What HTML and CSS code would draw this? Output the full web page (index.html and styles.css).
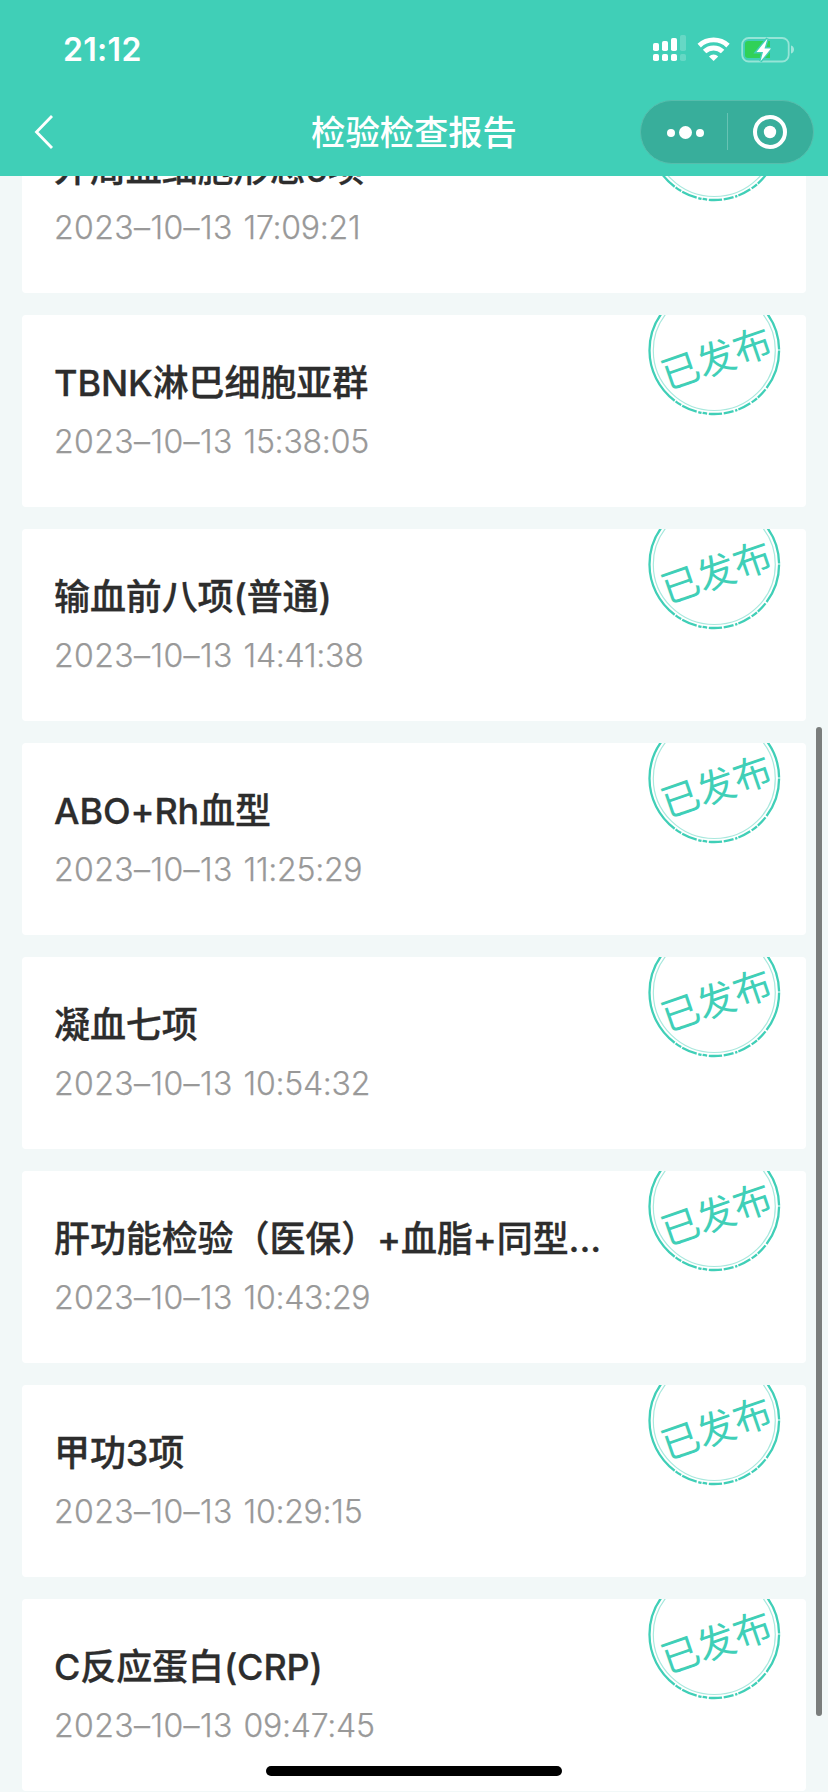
FILE: index.html
```html
<!DOCTYPE html>
<html lang="zh-CN">
<head>
<meta charset="utf-8">
<title>检验检查报告</title>
<link rel="stylesheet" href="styles.css">
</head>
<body>
<svg class="defs" aria-hidden="true">
  <symbol id="stamp" viewBox="0 0 136 136">
    <ellipse cx="68.300" cy="68.500" rx="61" ry="60" class="ring-inner"/>
    <ellipse cx="68.300" cy="68.500" rx="64.800" ry="63.500" class="ring-outer" pathLength="360"/>
    <text x="67.500" y="90.500" transform="rotate(-19 68 68)" text-anchor="middle" class="stamp-text">已发布</text>
  </symbol>
</svg>
<div class="screen">
  <header class="header">
    <div class="status">
      <span class="time">21:12</span>
      <svg class="status-icons" width="150" height="40" viewBox="0 0 150 40">
        <g fill="#fff">
          <rect x="8" y="13" width="6" height="8" rx="1.8"/><rect x="17" y="11" width="6" height="10" rx="1.8"/><rect x="26" y="8" width="6" height="13" rx="1.8"/>
          <rect x="8" y="24" width="6" height="7" rx="1.8"/><rect x="17" y="24" width="6" height="7" rx="1.8"/><rect x="26" y="24" width="6" height="7" rx="1.8"/>
          <g opacity=".2"><rect x="35" y="5" width="6" height="16" rx="1.8"/><rect x="35" y="24" width="6" height="7" rx="1.8"/></g>
        </g>
        <g fill="none" stroke="#fff" stroke-width="4.900">
          <path d="M54.200 15.600a21 21 0 0 1 28.800 0"/>
          <path d="M59.600 21.600a13 13 0 0 1 18 0"/>
        </g>
        <path d="M68.600 31l-4.600-4.600a6.600 6.600 0 0 1 9.200 0z" fill="#fff"/>
        <rect x="97.200" y="8" width="46.500" height="23.500" rx="6.500" fill="none" stroke="#fff" stroke-opacity=".45" stroke-width="1.800"/>
        <path d="M146 15.500c4 1 4 7 0 8z" fill="#fff" fill-opacity=".5"/>
        <path d="M103 11h22v17h-22a3 3 0 0 1-3-3V14a3 3 0 0 1 3-3z" fill="#30d158"/>
        <path d="M122.500 8.500L111.500 22h6.500l-2.500 9.200L126 18.500h-6.500z" fill="#fff" stroke="#40cfb7" stroke-width="3" paint-order="stroke"/>
      </svg>
    </div>
    <div class="nav">
      <svg class="back" width="24" height="40" viewBox="0 0 24 40"><path d="M20 4L4.500 20 20 36" fill="none" stroke="#fff" stroke-width="2.800"/></svg>
      <h1 class="nav-title">检验检查报告</h1>
      <svg class="capsule" width="174" height="64" viewBox="0 0 174 64">
        <rect x=".5" y=".5" width="173" height="63" rx="31.500" fill="#38ae9b" stroke="#56bdac"/>
        <g fill="#fff"><circle cx="31" cy="33" r="4"/><circle cx="45.500" cy="32.500" r="6.500"/><circle cx="60" cy="33" r="4"/><circle cx="130" cy="32" r="6.200"/></g>
        <path d="M87.500 13v37" stroke="#67c3b4"/>
        <circle cx="130" cy="32" r="15" fill="none" stroke="#fff" stroke-width="4"/>
      </svg>
    </div>
  </header>
  <main class="viewport">
    <div class="list">
      <article class="card"><h2 class="name">外周血细胞形态6项</h2><p class="date"><span class="day">2023–10–13</span> 17:09:21</p><svg class="stamp"><use href="#stamp"/></svg></article>
      <article class="card"><h2 class="name">TBNK淋巴细胞亚群</h2><p class="date"><span class="day">2023–10–13</span> 15:38:05</p><svg class="stamp"><use href="#stamp"/></svg></article>
      <article class="card"><h2 class="name">输血前八项(普通)</h2><p class="date"><span class="day">2023–10–13</span> 14:41:38</p><svg class="stamp"><use href="#stamp"/></svg></article>
      <article class="card"><h2 class="name">ABO+Rh血型</h2><p class="date"><span class="day">2023–10–13</span> 11:25:29</p><svg class="stamp"><use href="#stamp"/></svg></article>
      <article class="card"><h2 class="name">凝血七项</h2><p class="date"><span class="day">2023–10–13</span> 10:54:32</p><svg class="stamp"><use href="#stamp"/></svg></article>
      <article class="card"><h2 class="name">肝功能检验（医保）+血脂+同型...</h2><p class="date"><span class="day">2023–10–13</span> 10:43:29</p><svg class="stamp"><use href="#stamp"/></svg></article>
      <article class="card"><h2 class="name">甲功3项</h2><p class="date"><span class="day">2023–10–13</span> 10:29:15</p><svg class="stamp"><use href="#stamp"/></svg></article>
      <article class="card"><h2 class="name">C反应蛋白(CRP)</h2><p class="date"><span class="day">2023–10–13</span> 09:47:45</p><svg class="stamp"><use href="#stamp"/></svg></article>
    </div>
  </main>
  <div class="scrollbar"></div>
  <div class="home-indicator"></div>
</div>
</body>
</html>
```
FILE: styles.css
```css
* { box-sizing: border-box; margin: 0; padding: 0; }
body { background: #f2f8f8; font-family: Inter, "Noto Sans CJK SC", sans-serif; }
.defs { position: absolute; width: 0; height: 0; }
.screen { position: relative; width: 828px; height: 1792px; overflow: hidden; display: flex; flex-direction: column; background: #f2f8f8; }
.header { flex: none; height: 176px; background: #40cfb7; color: #fff; }
.status { height: 100px; padding: 30px 33px 0 63px; display: flex; justify-content: space-between; }
.time { font-size: 32px; font-weight: 600; line-height: 40px; letter-spacing: .3px; }
.nav { height: 64px; padding: 0 14px 0 32px; display: grid; grid-template-columns: 174px 1fr 174px; align-items: center; }
.nav-title { font-size: 34.300px; font-weight: 500; line-height: 50px; text-align: center; padding: 2px 18px 0 0; white-space: nowrap; }
.viewport { flex: 1; min-height: 0; display: flex; flex-direction: column; justify-content: flex-end; padding: 0 22px 1px; overflow: hidden; }
.list { display: flex; flex-direction: column; gap: 22px; }
.card { flex: none; position: relative; height: 192px; padding: 43px 32px 0; background: #fff; border-radius: 4px; overflow: hidden; }
.name { font-size: 36px; font-weight: 500; line-height: 50px; letter-spacing: -.1px; color: #2d2d2d; -webkit-text-stroke: .3px #2d2d2d; white-space: nowrap; }
.date { margin-top: 12px; font-size: 32px; font-weight: 300; line-height: 44px; letter-spacing: -.25px; word-spacing: 2px; color: #999; -webkit-text-stroke: .25px #999; white-space: nowrap; }
.day { letter-spacing: .4px; }
.stamp { position: absolute; right: 24px; top: -33px; width: 136px; height: 136px; }
.ring-outer { fill: none; stroke: #40cfb7; stroke-width: 2.300; stroke-dasharray: 36 1.500 10 1 6 1.500 12 1 2 1.500 9 1.500 12 1.500 4 1 3 1.500 14 1 6 1 231; }
.ring-inner { fill: none; stroke: #a9e8dd; stroke-width: 1.200; }
.stamp-text { font-family: "Noto Sans CJK SC", sans-serif; font-size: 38px; font-weight: 400; fill: #40cfb7; }
.scrollbar { position: absolute; right: 6px; top: 727px; width: 6px; height: 989px; border-radius: 3px; background: #7a7d7c; }
.home-indicator { position: absolute; left: 266px; bottom: 16px; width: 296px; height: 10px; border-radius: 5px; background: #000; }
```
